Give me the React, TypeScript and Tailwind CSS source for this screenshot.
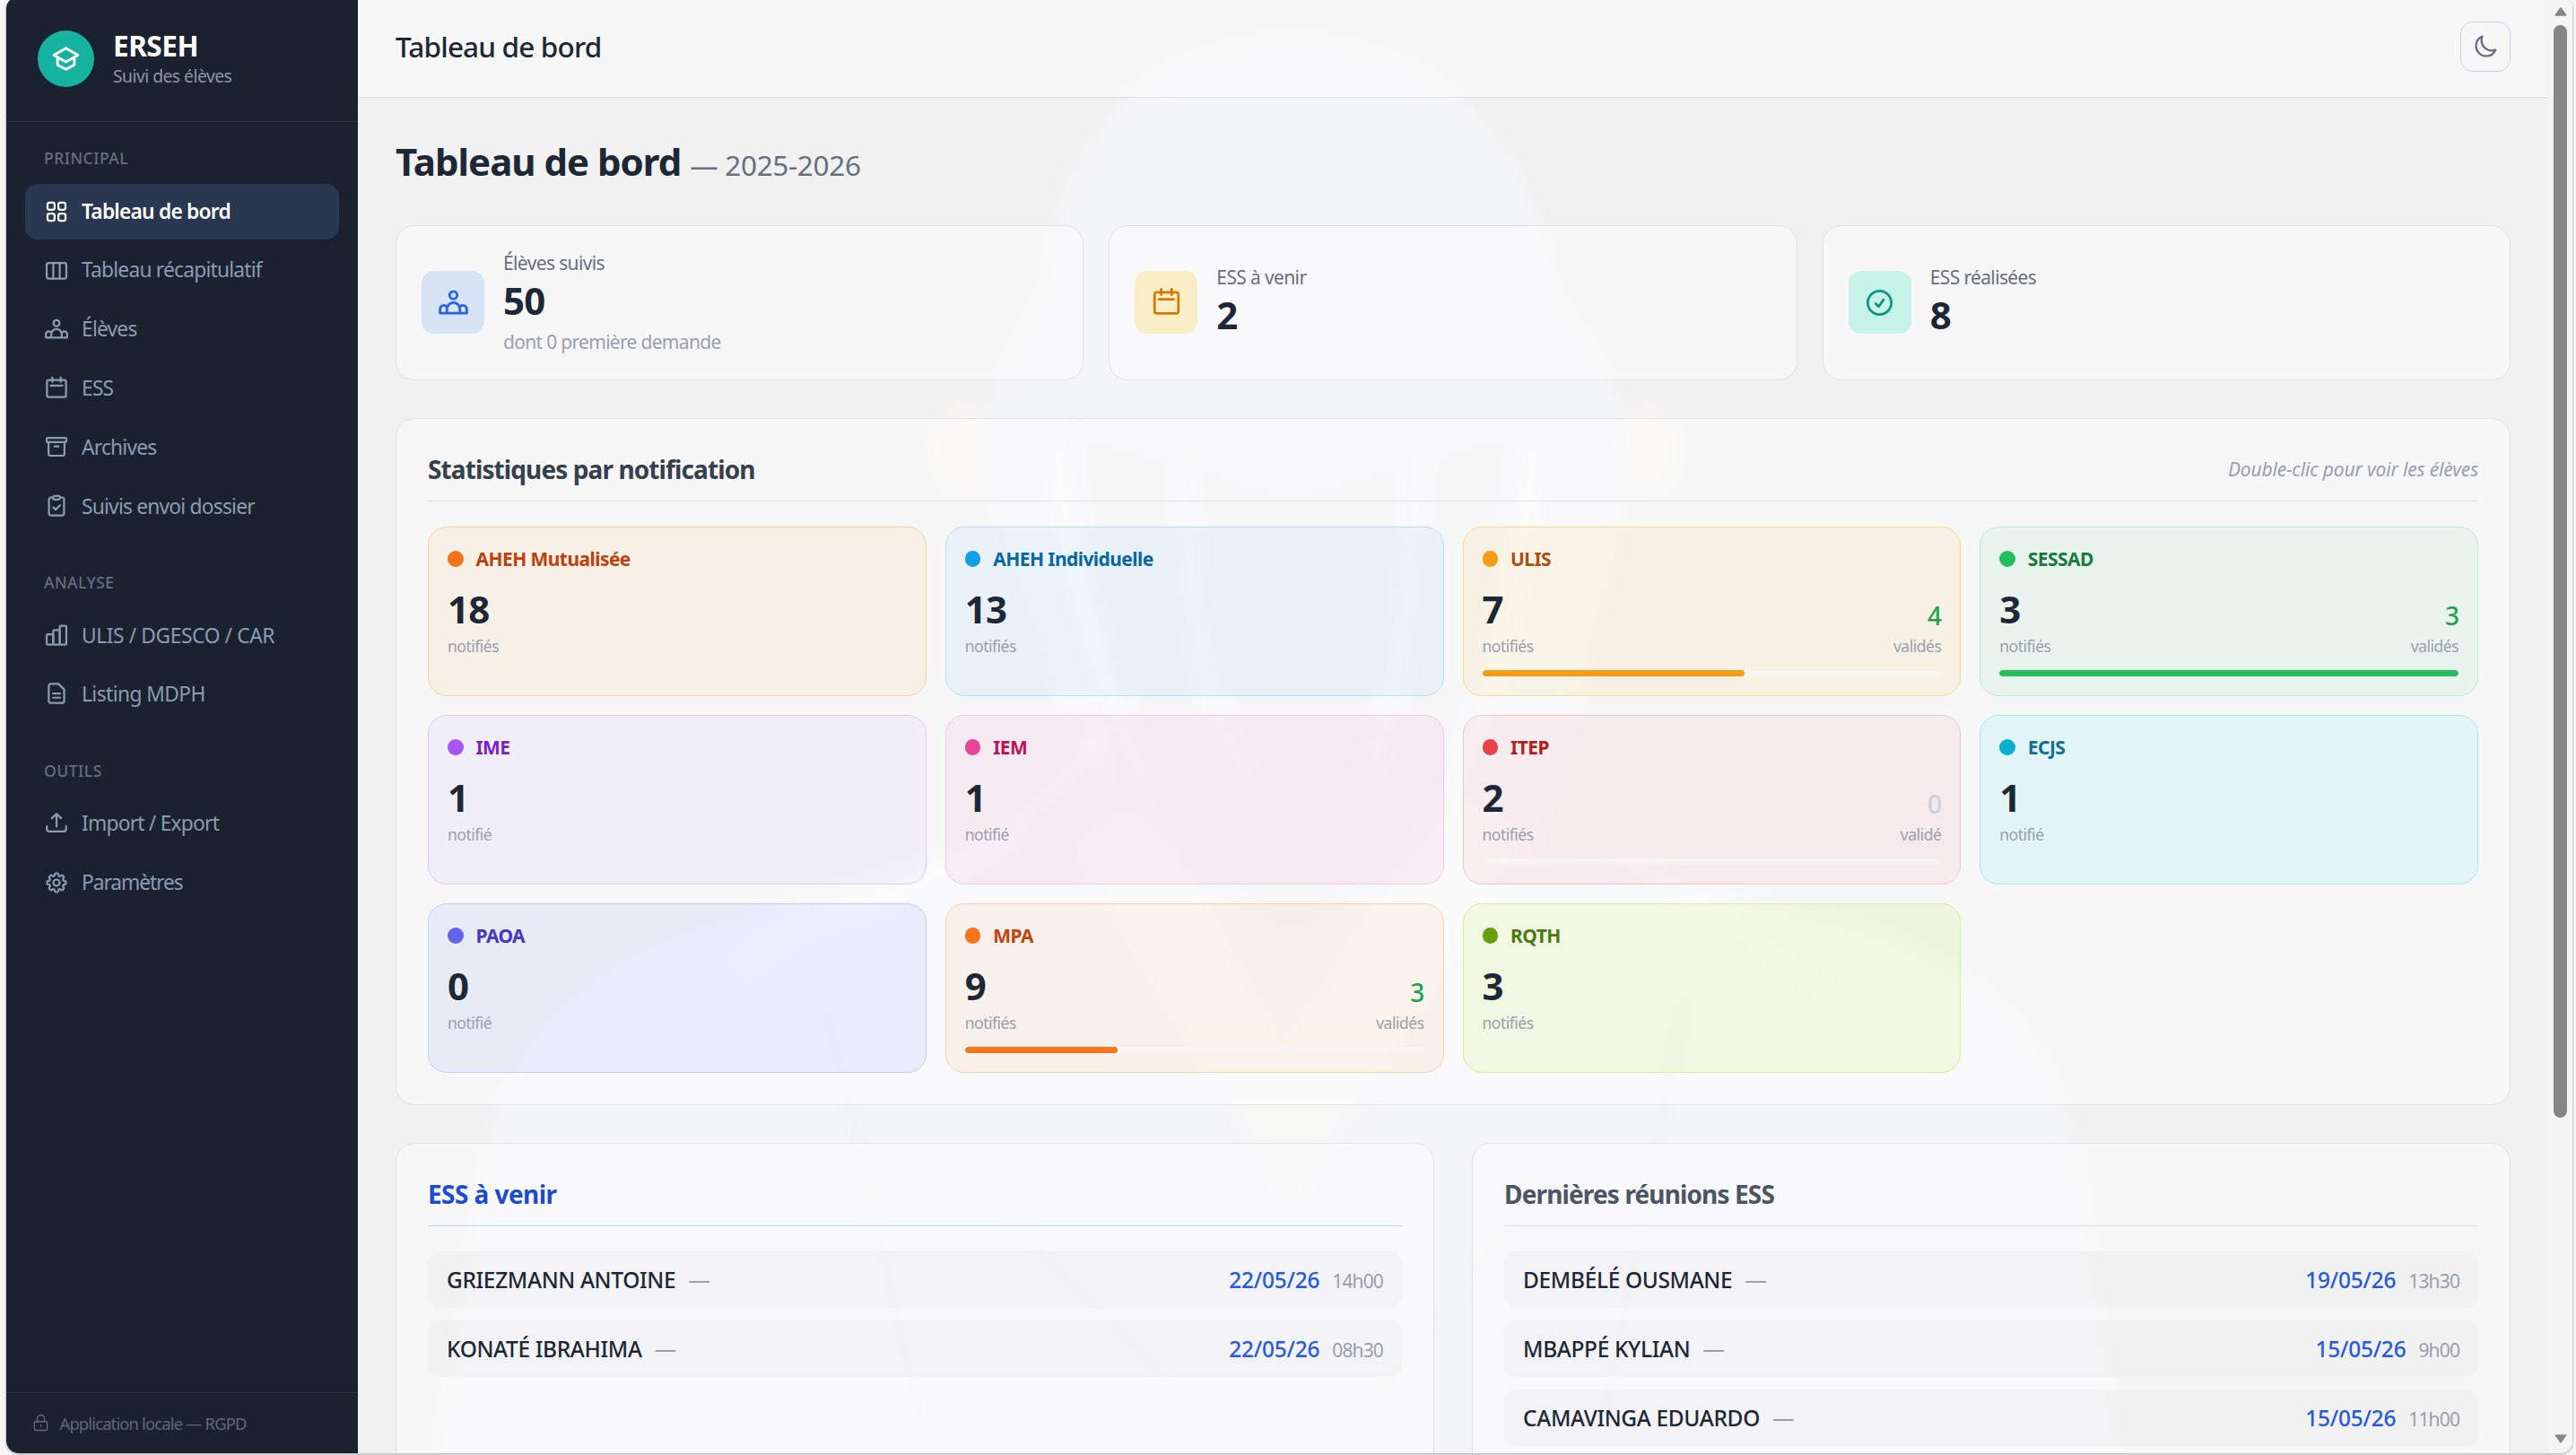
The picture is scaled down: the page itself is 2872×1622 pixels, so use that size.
import React from 'react';
import clsx from 'clsx';
import { HiOutlineCheckCircle, HiOutlineCog8Tooth, HiOutlineMoon } from 'react-icons/hi2';

type IconProps = { className?: string };

const Svg: React.FC<IconProps & { width?: number; children: React.ReactNode }> = ({
  className = 'size-4',
  width = 1.9,
  children,
}) => (
  <svg
    viewBox="0 0 24 24"
    fill="none"
    stroke="currentColor"
    strokeWidth={width}
    strokeLinecap="round"
    strokeLinejoin="round"
    className={clsx('shrink-0', className)}
  >
    {children}
  </svg>
);

const GridIcon = () => (
  <Svg>
    <rect x="3.4" y="3.4" width="6.8" height="6.8" rx="2" />
    <rect x="13.8" y="3.4" width="6.8" height="6.8" rx="2" />
    <rect x="3.4" y="13.8" width="6.8" height="6.8" rx="2" />
    <rect x="13.8" y="13.8" width="6.8" height="6.8" rx="2" />
  </Svg>
);

const ColumnsIcon = () => (
  <Svg>
    <rect x="2.6" y="4.4" width="18.8" height="15" rx="2" />
    <path d="M8.9 4.4v15M15.1 4.4v15" />
  </Svg>
);

const PeopleIcon = ({ className }: IconProps) => (
  <Svg className={className}>
    <circle cx="12" cy="6.2" r="2.9" />
    <path d="M7 20v-3.1a5 5 0 0 1 10 0V20M7 15.2a2.9 2.9 0 0 0-5.2 1.9V20h20.4v-2.9a2.9 2.9 0 0 0-5.2-1.9" />
  </Svg>
);

const CalendarIcon = ({ className }: IconProps) => (
  <Svg className={className}>
    <rect x="2.9" y="4" width="18.2" height="16.2" rx="1.8" />
    <path d="M8 1.6v4.2M16 1.6v4.2M6.4 9.3h11.2" />
  </Svg>
);

const ArchiveIcon = () => (
  <Svg>
    <rect x="2.6" y="2.6" width="18.8" height="4.2" rx="1.2" />
    <path d="M4.4 6.8v10.9a2 2 0 0 0 2 2h11.2a2 2 0 0 0 2-2V6.8M10 10.8h4" />
  </Svg>
);

const ClipboardIcon = () => (
  <Svg>
    <path d="M8.6 3H6.8a2 2 0 0 0-2 2v13.2a2 2 0 0 0 2 2h10.4a2 2 0 0 0 2-2V5a2 2 0 0 0-2-2h-1.8" />
    <rect x="8.6" y="1.6" width="6.8" height="3.4" rx="1.7" />
    <path d="m8.8 12.4 2.3 2.3 4.3-4.2" />
  </Svg>
);

const BarsIcon = () => (
  <Svg>
    <rect x="2.6" y="10.4" width="6.3" height="9.8" rx="1.2" />
    <rect x="8.9" y="6.4" width="6.2" height="13.8" rx="1.2" />
    <rect x="15.1" y="2.2" width="6.3" height="18" rx="1.2" />
  </Svg>
);

const DocIcon = () => (
  <Svg>
    <path d="M6.6 2h7.2l5.5 5.2v11a2 2 0 0 1-2 2H6.6a2 2 0 0 1-2-2V4a2 2 0 0 1 2-2z" />
    <path d="M8.6 11.2h6.8M8.6 15.2h6.8" />
  </Svg>
);

const UploadIcon = () => (
  <Svg>
    <path d="M12 15V2.8M7.6 7 12 2.8 16.4 7M2.8 14.6v2.8a2.2 2.2 0 0 0 2.2 2.2h14a2.2 2.2 0 0 0 2.2-2.2v-2.8" />
  </Svg>
);

const LockIcon = () => (
  <Svg className="size-3" width={1.7}>
    <rect x="3.8" y="10" width="16.4" height="11.2" rx="2" />
    <path d="M7.4 10V6.4a4.6 4.6 0 0 1 9.2 0V10M12 14.6v1.8" />
  </Svg>
);

const CapIcon = () => (
  <Svg className="size-5" width={2}>
    <path d="M12 4 2.8 9.2 12 14.4l9.2-5.2z" />
    <path d="M5.6 11v5.8L12 20l6.4-3.2V11" />
  </Svg>
);

type NavItem = { label: string; icon: React.ReactNode; active?: boolean; className?: string };

const NAV: { title: string; items: NavItem[] }[] = [
  {
    title: 'Principal',
    items: [
      { label: 'Tableau de bord', icon: <GridIcon />, active: true },
      { label: 'Tableau récapitulatif', icon: <ColumnsIcon /> },
      { label: 'Élèves', icon: <PeopleIcon /> },
      { label: 'ESS', icon: <CalendarIcon /> },
      { label: 'Archives', icon: <ArchiveIcon /> },
      { label: 'Suivis envoi dossier', icon: <ClipboardIcon /> },
    ],
  },
  {
    title: 'Analyse',
    items: [
      { label: 'ULIS / DGESCO / CAR', icon: <BarsIcon />, className: 'tracking-[-0.017em]' },
      { label: 'Listing MDPH', icon: <DocIcon />, className: 'tracking-[-0.025em]' },
    ],
  },
  {
    title: 'Outils',
    items: [
      { label: 'Import / Export', icon: <UploadIcon /> },
      {
        label: 'Paramètres',
        icon: <HiOutlineCog8Tooth className="size-4 shrink-0 [&_path]:stroke-[1.9]" />,
        className: 'tracking-[-0.047em]',
      },
    ],
  },
];

const STATS = [
  {
    label: 'Élèves suivis',
    value: 50,
    sub: 'dont 0 première demande',
    icon: <PeopleIcon className="size-5" />,
    tone: 'bg-[#d6e4f6] text-[#2563eb]',
  },
  { label: 'ESS à venir', value: 2, icon: <CalendarIcon className="size-5" />, tone: 'bg-[#f9eec5] text-[#d97706]' },
  {
    label: 'ESS réalisées',
    value: 8,
    icon: <HiOutlineCheckCircle className="size-5 [&_path]:stroke-[1.9]" />,
    tone: 'bg-[#c6f2e7] text-[#0d9488]',
  },
];

type Notif = {
  name: string;
  count: number;
  valid?: number;
  card: string;
  dot: string;
  text: string;
};

const NOTIFS: Notif[] = [
  { name: 'AHEH Mutualisée', count: 18, card: 'bg-[#f7a030]/8 border-[#f6cf9f]', dot: 'bg-[#f37318]', text: 'text-[#c03f0c]' },
  { name: 'AHEH Individuelle', count: 13, card: 'bg-[#0e95e9]/6 border-[#b5def5]', dot: 'bg-[#0f9fe6]', text: 'text-[#0567a3]' },
  { name: 'ULIS', count: 7, valid: 4, card: 'bg-[#f0c020]/9 border-[#f5dc80]', dot: 'bg-[#f59c12]', text: 'text-[#b04e0c]' },
  { name: 'SESSAD', count: 3, valid: 3, card: 'bg-[#22c55e]/6 border-[#b3eec5]', dot: 'bg-[#22c05c]', text: 'text-[#187a3e]' },
  { name: 'IME', count: 1, card: 'bg-[#8f60f7]/6 border-[#dccbf6]', dot: 'bg-[#a654f2]', text: 'text-[#7a22c6]' },
  { name: 'IEM', count: 1, card: 'bg-[#e04898]/7 border-[#f6c8e0]', dot: 'bg-[#e84699]', text: 'text-[#b8165a]' },
  { name: 'ITEP', count: 2, valid: 0, card: 'bg-[#e04860]/7 border-[#f8c2c6]', dot: 'bg-[#e84346]', text: 'text-[#b51c1c]' },
  { name: 'ECJS', count: 1, card: 'bg-[#22e2f0]/9 border-[#a4e8f3]', dot: 'bg-[#07b0d0]', text: 'text-[#107090]' },
  { name: 'PAOA', count: 0, card: 'bg-[#4f7df5]/9 border-[#c2cdf5]', dot: 'bg-[#6164ec]', text: 'text-[#4137c6]' },
  { name: 'MPA', count: 9, valid: 3, card: 'bg-[#f79830]/8 border-[#f8d2a4]', dot: 'bg-[#f6741a]', text: 'text-[#c0440f]' },
  { name: 'RQTH', count: 3, card: 'bg-[#b0f020]/11 border-[#d6f094]', dot: 'bg-[#66a010]', text: 'text-[#4a7a12]' },
];

const UPCOMING = [
  { name: 'GRIEZMANN ANTOINE', date: '22/05/26', time: '14h00' },
  { name: 'KONATÉ IBRAHIMA', date: '22/05/26', time: '08h30' },
];

const LATEST = [
  { name: 'DEMBÉLÉ OUSMANE', date: '19/05/26', time: '13h30' },
  { name: 'MBAPPÉ KYLIAN', date: '15/05/26', time: '9h00' },
  { name: 'CAMAVINGA EDUARDO', date: '15/05/26', time: '11h00' },
];

const Sidebar = () => (
  <aside className="flex w-56 shrink-0 flex-col bg-[#1a2230]">
    <div className="flex items-center gap-3 border-b border-[#2b3442] px-5 pt-[20.9px] pb-[20.7px]">
      <div className="flex size-9 items-center justify-center rounded-full bg-[#15b3a0] text-white">
        <CapIcon />
      </div>
      <div>
        <div className="text-lg leading-5 font-bold tracking-[-0.015em] text-white">ERSEH</div>
        <div className="mt-0.5 text-[11px] leading-4 tracking-[-0.026em] text-[#8f97a3]">Suivi des élèves</div>
      </div>
    </div>

    <nav className="flex flex-1 flex-col gap-[23px] px-3 pt-[15.4px]">
      {NAV.map(group => (
        <div key={group.title}>
          <div className="mb-[8.7px] px-3 text-[10px] leading-[15px] font-medium tracking-[0.03em] text-[#666e7a] uppercase">
            {group.title}
          </div>
          <div className="flex flex-col gap-[2.1px]">
            {group.items.map(item => (
              <a
                key={item.label}
                className={clsx(
                  'flex items-center gap-2 rounded-lg px-3 py-2 text-[13px] leading-[19.5px]',
                  item.active ? 'bg-[#2a3750] font-semibold text-white' : 'text-[#8d9bb0]',
                  item.className ?? 'tracking-[-0.034em]'
                )}
              >
                {item.icon}
                {item.label}
              </a>
            ))}
          </div>
        </div>
      ))}
    </nav>

    <div className="flex h-[39px] items-center gap-1.5 border-t border-[#2b3442] px-4 text-[10.5px] text-[#606876]">
      <LockIcon />
      <span className="tracking-[-0.045em]">Application locale — RGPD</span>
    </div>
  </aside>
);

// Faint portrait behind the translucent cards
const Watermark = () => (
  <svg
    viewBox="0 0 2442 1624"
    preserveAspectRatio="none"
    className="pointer-events-none absolute inset-0 h-full w-full"
  >
    <defs>
      <filter id="soft" x="-10%" y="-10%" width="120%" height="120%">
        <feGaussianBlur stdDeviation="9" />
      </filter>
    </defs>
    <g filter="url(#soft)">
      <path
        d="M770 320C780 140 900 50 1040 50s270 90 290 270l90 150-20 160-90 330 300 60c180 40 290 130 310 300l40 310H90l50-310c20-170 130-260 310-300l380-110-110-300-30-130z"
        fill="#f7f9fb"
        opacity="0.6"
      />
      <ellipse cx="675" cy="505" rx="30" ry="48" fill="#fffdf4" opacity="0.45" />
      <ellipse cx="1440" cy="505" rx="30" ry="48" fill="#fffdf4" opacity="0.45" />
      <path d="M790 470l250 70 260-70-60 420-200 180-190-180z" fill="#eceef0" opacity="0.5" />
      <path d="M880 900l150 290 190-300 80 40-260 420-230-400z" fill="#fffdf6" opacity="0.3" />
      <g stroke="#fff" strokeWidth="12" fill="none" opacity="0.7">
        <path d="M780 500c20 160 60 280 100 380M920 520c10 160 20 270 70 350M1180 500c0 160-20 270-50 360M1310 500c-10 160-60 300-90 400" />
        <path d="M430 1080c80-80 260-60 400-260M1400 960c140 40 180 160 330 170" />
      </g>
      <g stroke="#eaecee" strokeWidth="10" fill="none" opacity="0.5">
        <path d="M520 1120l110 480M1480 1120l-90 460M640 1280l300 300M1340 1300l-220 280" />
      </g>
    </g>
  </svg>
);

const StatCard = ({ stat }: { stat: (typeof STATS)[number] }) => (
  <div className="flex h-[99px] items-center gap-3 rounded-xl border border-[#dfe1e5] bg-white/45 px-4">
    <div className={clsx('flex size-10 shrink-0 items-center justify-center rounded-lg', stat.tone)}>
      {stat.icon}
    </div>
    <div>
      <div className="text-xs tracking-[-0.03em] text-[#69707c]">{stat.label}</div>
      <div className="text-2xl leading-8 font-bold text-[#1e2735]">{stat.value}</div>
      {stat.sub && <div className="mt-0.5 text-xs tracking-[-0.033em] text-[#999fac]">{stat.sub}</div>}
    </div>
  </div>
);

const NotifCard = ({ notif }: { notif: Notif }) => {
  const hasValid = notif.valid !== undefined;
  const valid = notif.valid ?? 0;

  return (
    <div className={clsx('h-[108px] rounded-xl border p-3', notif.card)}>
      <div className="mb-2 flex items-center gap-2">
        <span className={clsx('size-2.5 rounded-full', notif.dot)} />
        <span className={clsx('text-xs font-bold tracking-[-0.027em]', notif.text)}>{notif.name}</span>
      </div>
      <div className="flex items-end justify-between">
        <div>
          <div className="text-2xl leading-8 font-bold text-[#1e2735]">{notif.count}</div>
          <div className="text-[10px] leading-[15px] tracking-[-0.028em] text-[#999fac]">
            {notif.count > 1 ? 'notifiés' : 'notifié'}
          </div>
        </div>
        {hasValid && (
          <div className="text-right">
            <div className={clsx('text-base font-medium', valid > 0 ? 'text-[#1ca351]' : 'text-[#cccfda]')}>
              {valid}
            </div>
            <div className="text-[10px] leading-[15px] tracking-[-0.028em] text-[#999fac]">
              {valid > 1 ? 'validés' : 'validé'}
            </div>
          </div>
        )}
      </div>
      {hasValid && (
        <div className="mt-2 h-1 overflow-hidden rounded-full bg-[#f7f6f8]/70">
          <div
            className={clsx('h-full rounded-full', notif.dot)}
            style={{ width: `${(valid / notif.count) * 100}%` }}
          />
        </div>
      )}
    </div>
  );
};

const MeetingPanel: React.FC<{
  title: string;
  titleClass: string;
  rows: typeof LATEST;
}> = ({ title, titleClass, rows }) => (
  <section className="h-[240px] rounded-xl border border-[#dfe1e5] bg-white/45 p-5">
    <h2 className={clsx('mb-4 border-b pb-2 text-base font-bold', titleClass)}>{title}</h2>
    <div className="flex flex-col gap-2">
      {rows.map(row => (
        <div key={row.name} className="flex items-center justify-between rounded-lg bg-[#000010]/[0.025] px-3 py-2 text-sm">
          <div className="text-[#1e2735]">
            <span className="font-medium tracking-[-0.015em]">{row.name}</span>
            <span className="ml-2 text-[#999fac]">—</span>
          </div>
          <div>
            <span className="font-medium tracking-[-0.01em] text-[#2459e0]">{row.date}</span>
            <span className="ml-2 text-xs text-[#999fac]">{row.time}</span>
          </div>
        </div>
      ))}
    </div>
  </section>
);

const Scrollbar = () => (
  <div className="flex w-[15.4px] shrink-0 flex-col items-center bg-[#f5f5f6]">
    <svg viewBox="0 0 8 6" className="mt-[7px] h-[5.6px] w-2 text-[#868686]">
      <path d="M4 .6 7.4 5.4H.6z" fill="currentColor" stroke="currentColor" strokeLinejoin="round" />
    </svg>
    <div className="mt-[5.5px] h-[696px] w-[9px] rounded-full bg-[#868686]" />
    <svg viewBox="0 0 8 6" className="mt-auto mb-[6.5px] h-[5.6px] w-2 text-[#868686]">
      <path d="M4 5.4.6.6h6.8z" fill="currentColor" stroke="currentColor" strokeLinejoin="round" />
    </svg>
  </div>
);

export default function App() {
  return (
    <div className="h-[1622px] w-[2872px] overflow-hidden bg-[#f6f6f6] pr-[4px] pl-[7px]">
      <div className="-mt-[4px] h-[1624px] w-[2861px] rounded-[14px] shadow-[0_1px_2px_1px_#c4c4c4]">
        <div className="flex h-full w-full overflow-hidden rounded-lg bg-[#f1f1f1] font-['Noto_Sans','Open_Sans',sans-serif] tracking-[-0.03em] [zoom:1.75]">
          <Sidebar />

          <div className="relative min-w-0 flex-1 overflow-hidden">
            <Watermark />
            <div className="relative">
              <header className="flex items-center justify-between border-b border-[#dcdee2] bg-white/45 px-6 py-4">
                <div className="text-lg leading-8 font-medium text-[#1e2735]">Tableau de bord</div>
                <button className="flex size-8 items-center justify-center rounded-lg border border-[#cdcedd] text-[#686c80]">
                  <HiOutlineMoon className="size-4 [&_path]:stroke-[1.9]" />
                </button>
              </header>

              <main className="px-6 pt-[24.4px]">
                <h1 className="mb-[22.2px] text-2xl leading-8 font-bold tracking-[-0.024em] text-[#1e2735]">
                  Tableau de bord{' '}
                  <span className="text-lg leading-8 font-normal tracking-[-0.01em] text-[#69707c]">— 2025-2026</span>
                </h1>

                <div className="mb-6 grid grid-cols-3 gap-4">
                  {STATS.map(stat => (
                    <StatCard key={stat.label} stat={stat} />
                  ))}
                </div>

                <section className="mb-6 rounded-xl border border-[#dfe1e5] bg-white/45 p-5">
                  <div className="mb-4 flex items-center justify-between border-b border-[#dcdee2] pb-2">
                    <h2 className="text-base font-bold tracking-[-0.032em] text-[#353f4d]">
                      Statistiques par notification
                    </h2>
                    <span className="text-xs tracking-[-0.008em] text-[#999fac] italic">
                      Double-clic pour voir les élèves
                    </span>
                  </div>
                  <div className="grid grid-cols-4 gap-3">
                    {NOTIFS.map(notif => (
                      <NotifCard key={notif.name} notif={notif} />
                    ))}
                  </div>
                </section>

                <div className="grid grid-cols-2 gap-6">
                  <MeetingPanel
                    title="ESS à venir"
                    titleClass="border-[#b5d6f7] tracking-[-0.02em] text-[#1d4bd0]"
                    rows={UPCOMING}
                  />
                  <MeetingPanel
                    title="Dernières réunions ESS"
                    titleClass="border-[#dcdee2] tracking-[-0.031em] text-[#4b5563]"
                    rows={LATEST}
                  />
                </div>
              </main>
            </div>
          </div>

          <Scrollbar />
        </div>
      </div>
    </div>
  );
}
